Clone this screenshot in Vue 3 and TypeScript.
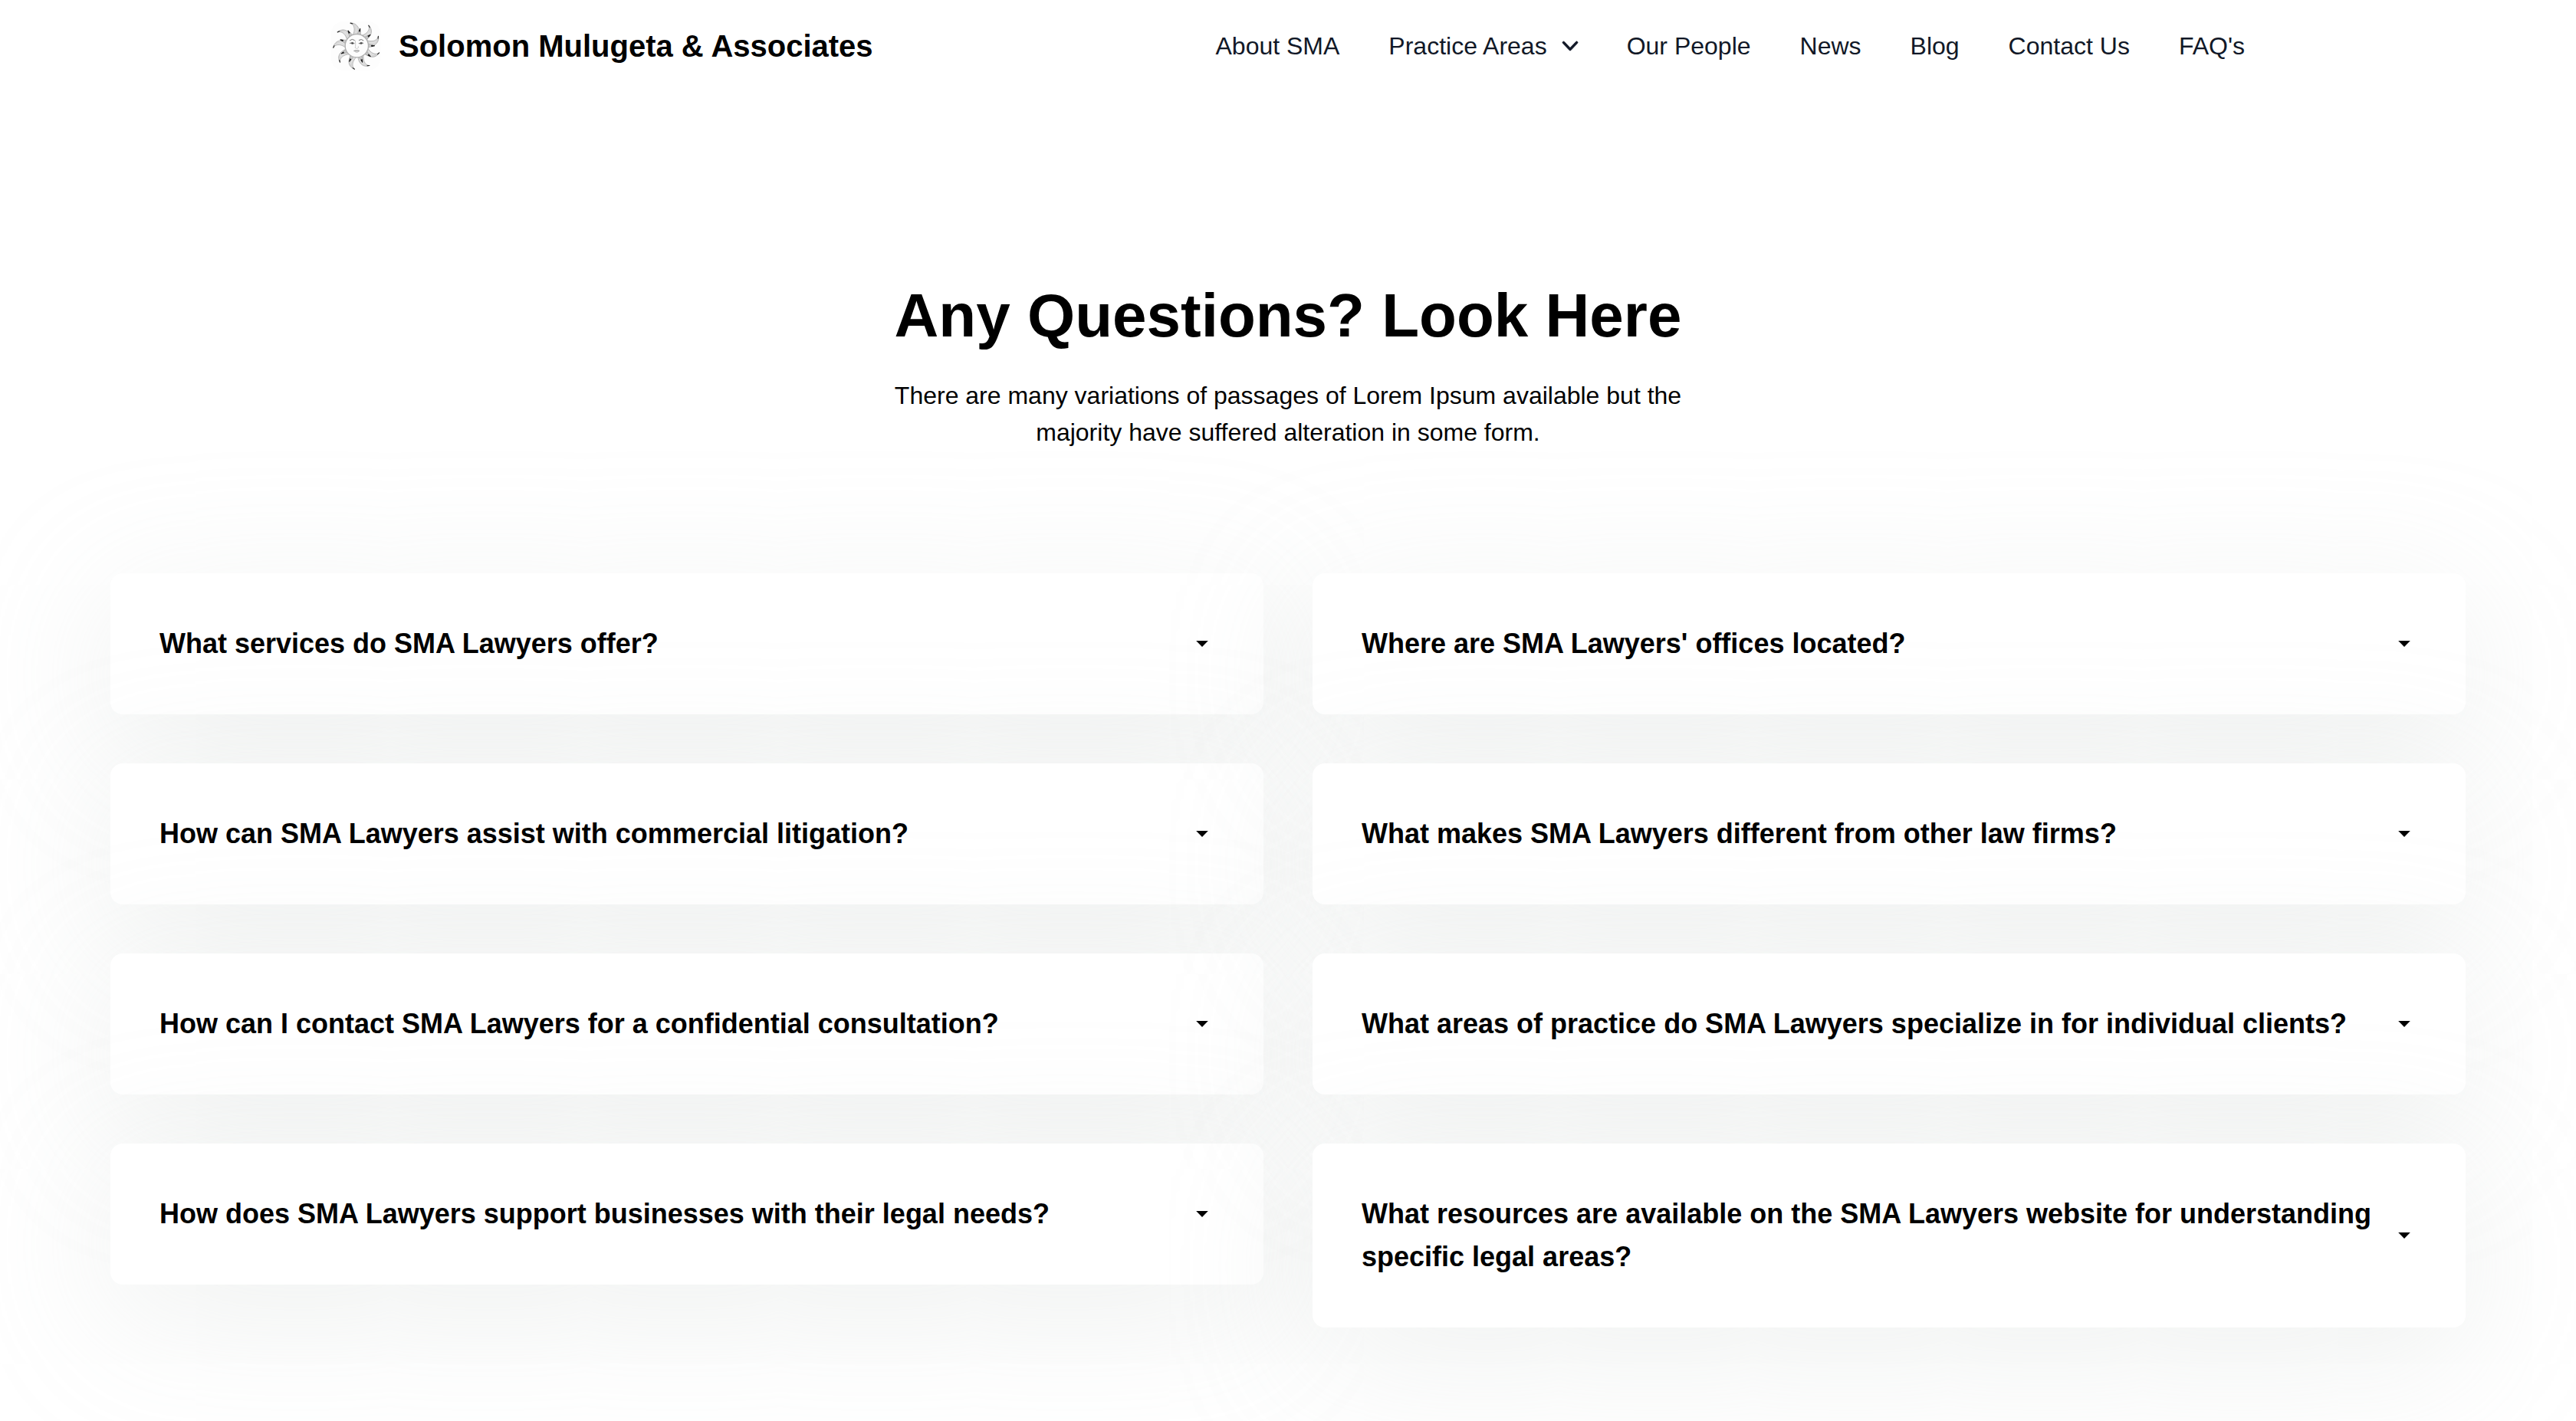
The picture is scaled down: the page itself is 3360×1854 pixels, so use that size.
<script setup lang="ts">
interface NavLink {
  label: string
  menu?: boolean
}

const links: NavLink[] = [
  { label: 'About SMA' },
  { label: 'Practice Areas', menu: true },
  { label: 'Our People' },
  { label: 'News' },
  { label: 'Blog' },
  { label: 'Contact Us' },
  { label: "FAQ's" },
]

const columns: string[][] = [
  [
    'What services do SMA Lawyers offer?',
    'How can SMA Lawyers assist with commercial litigation?',
    'How can I contact SMA Lawyers for a confidential consultation?',
    'How does SMA Lawyers support businesses with their legal needs?',
  ],
  [
    "Where are SMA Lawyers' offices located?",
    'What makes SMA Lawyers different from other law firms?',
    'What areas of practice do SMA Lawyers specialize in for individual clients?',
    'What resources are available on the SMA Lawyers website for understanding specific legal areas?',
  ],
]

// Nine wavy rays with a short dark spike between each pair, in degrees from straight up
const rays = [-15, 31, 67, 108, 148, 186, 226, 266, 306]
const spikes = [11, 51, 90, 128, 161, 205, 243, 290, 330]
</script>

<template>
  <div class="page">
    <header class="header">
      <a class="brand">
        <svg class="logo" viewBox="36 54 192 192" aria-hidden="true">
          <rect x="36" y="54" width="192" height="192" rx="48" fill="#fdfdfd" />
          <g transform="translate(136 149)" fill="none" stroke-linecap="round">
            <g v-for="a in rays" :key="'r' + a" :transform="`rotate(${a})`">
              <path
                d="M-3 -45C8 -58 15 -78 0 -92C20 -87 31 -68 21 -43Z"
                fill="#e9e9e9"
                stroke="#a0a0a0"
                stroke-width="2"
              />
              <path
                d="M2 -48C14 -62 17 -78 6 -89M8 -48C20 -62 21 -76 10 -86M14 -47C24 -60 25 -72 16 -82"
                stroke="#bcbcbc"
                stroke-width="1.4"
              />
              <path d="M-1 -92L6 -88" stroke="#2c2c2c" stroke-width="3.6" />
            </g>
            <g v-for="a in spikes" :key="'s' + a" :transform="`rotate(${a})`">
              <path d="M-7 -46L0 -68L7 -46" fill="#c8c8c8" stroke="#989898" stroke-width="1.6" />
              <path d="M0 -69L-2 -58L2 -58Z" fill="#1c1c1c" stroke="#1c1c1c" stroke-width="2.8" />
            </g>
            <circle r="45.5" fill="#fdfdfd" stroke="#b0b0b0" stroke-width="4" />
            <path d="M-27 -21Q-18 -29 -9 -22M9 -22Q18 -28 26 -21" stroke="#787878" stroke-width="3" />
            <path d="M-26 -10Q-18 -17 -9 -9Q-18 -5 -26 -10ZM9 -9Q18 -17 26 -10Q18 -5 9 -9Z" fill="#b4b4b4" stroke="#7c7c7c" stroke-width="2.2" />
            <circle cx="-17" cy="-10" r="3.6" fill="#444" />
            <circle cx="17" cy="-10" r="3.6" fill="#444" />
            <path d="M-6 -20Q-4 -6 -5 3Q-9 9 -3 10Q0 12 3 10Q9 9 6 3" stroke="#b8b8b8" stroke-width="2.2" />
            <path d="M-10 20Q-4 15 0 18Q4 15 10 20Q0 32 -10 20ZM-10 20H10" fill="#e4e4e4" stroke="#989898" stroke-width="2" />
          </g>
        </svg>
        <span class="brand-name">Solomon Mulugeta &amp; Associates</span>
      </a>
      <nav class="nav">
        <a v-for="link in links" :key="link.label" class="nav-link" :class="{ 'has-menu': link.menu }">
          <span>{{ link.label }}</span>
          <svg v-if="link.menu" class="chevron" viewBox="5 7 10 6" aria-hidden="true">
            <path
              fill="currentColor"
              fill-rule="evenodd"
              stroke="currentColor"
              stroke-width="0.3"
              d="M5.23 7.21a.75.75 0 011.06.02L10 11.168l3.71-3.938a.75.75 0 111.08 1.04l-4.25 4.5a.75.75 0 01-1.08 0l-4.25-4.5a.75.75 0 01.02-1.06z"
            />
          </svg>
        </a>
      </nav>
    </header>

    <main>
      <section class="intro">
        <h1>Any Questions? Look Here</h1>
        <p>
          There are many variations of passages of Lorem Ipsum available but the<br />
          majority have suffered alteration in some form.
        </p>
      </section>

      <section class="faq">
        <div v-for="(column, i) in columns" :key="i" class="column">
          <div v-for="question in column" :key="question" class="card">
            <h2>{{ question }}</h2>
            <svg class="caret" viewBox="0 0 16 8" aria-hidden="true">
              <path fill="currentColor" d="M0.2 0H15.8L8 8Z" />
            </svg>
          </div>
        </div>
      </section>
    </main>
  </div>
</template>

<style>
body {
  margin: 0;
  background: #fff;
}
</style>

<style scoped>
.page {
  box-sizing: border-box;
  height: 1854px;
  overflow: hidden;
  background: #fff;
  color: #000;
  font-family: 'Liberation Sans', Arial, Helvetica, sans-serif;
}

.header {
  display: flex;
  align-items: center;
  justify-content: space-between;
  width: 2496px;
  height: 120px;
  margin: 0 auto;
}

.brand {
  display: flex;
  align-items: center;
  gap: 24px;
}

.logo {
  width: 64px;
  height: 64px;
}

.brand-name {
  font-size: 40px;
  font-weight: 700;
  line-height: 56px;
  white-space: nowrap;
}

.nav {
  display: flex;
  gap: 64px;
  color: #111827;
  font-size: 32px;
  line-height: 48px;
  white-space: nowrap;
}

.nav-link {
  display: flex;
  align-items: center;
}

.has-menu {
  gap: 20px;
}

.chevron {
  width: 20px;
  height: 12px;
  overflow: visible;
}

.intro {
  padding-top: 252px;
  text-align: center;
}

h1 {
  margin: 0;
  font-size: 80px;
  font-weight: 700;
  line-height: 80px;
}

.intro p {
  margin: 40px 0 0;
  font-size: 32px;
  line-height: 48px;
}

.faq {
  display: flex;
  align-items: flex-start;
  gap: 64px;
  padding: 160px 144px 0;
}

.column {
  display: flex;
  flex: 1 1 0;
  flex-direction: column;
  gap: 64px;
}

.card {
  display: flex;
  align-items: center;
  justify-content: space-between;
  padding: 64px;
  border-radius: 16px;
  background: #fff;
  box-shadow: 0 40px 190px 0 rgba(198, 205, 203, 0.3);
}

h2 {
  margin: 0;
  font-size: 36px;
  font-weight: 700;
  line-height: 56px;
}

.caret {
  flex: none;
  width: 16px;
  height: 8px;
  margin: 0 8px;
}
</style>
